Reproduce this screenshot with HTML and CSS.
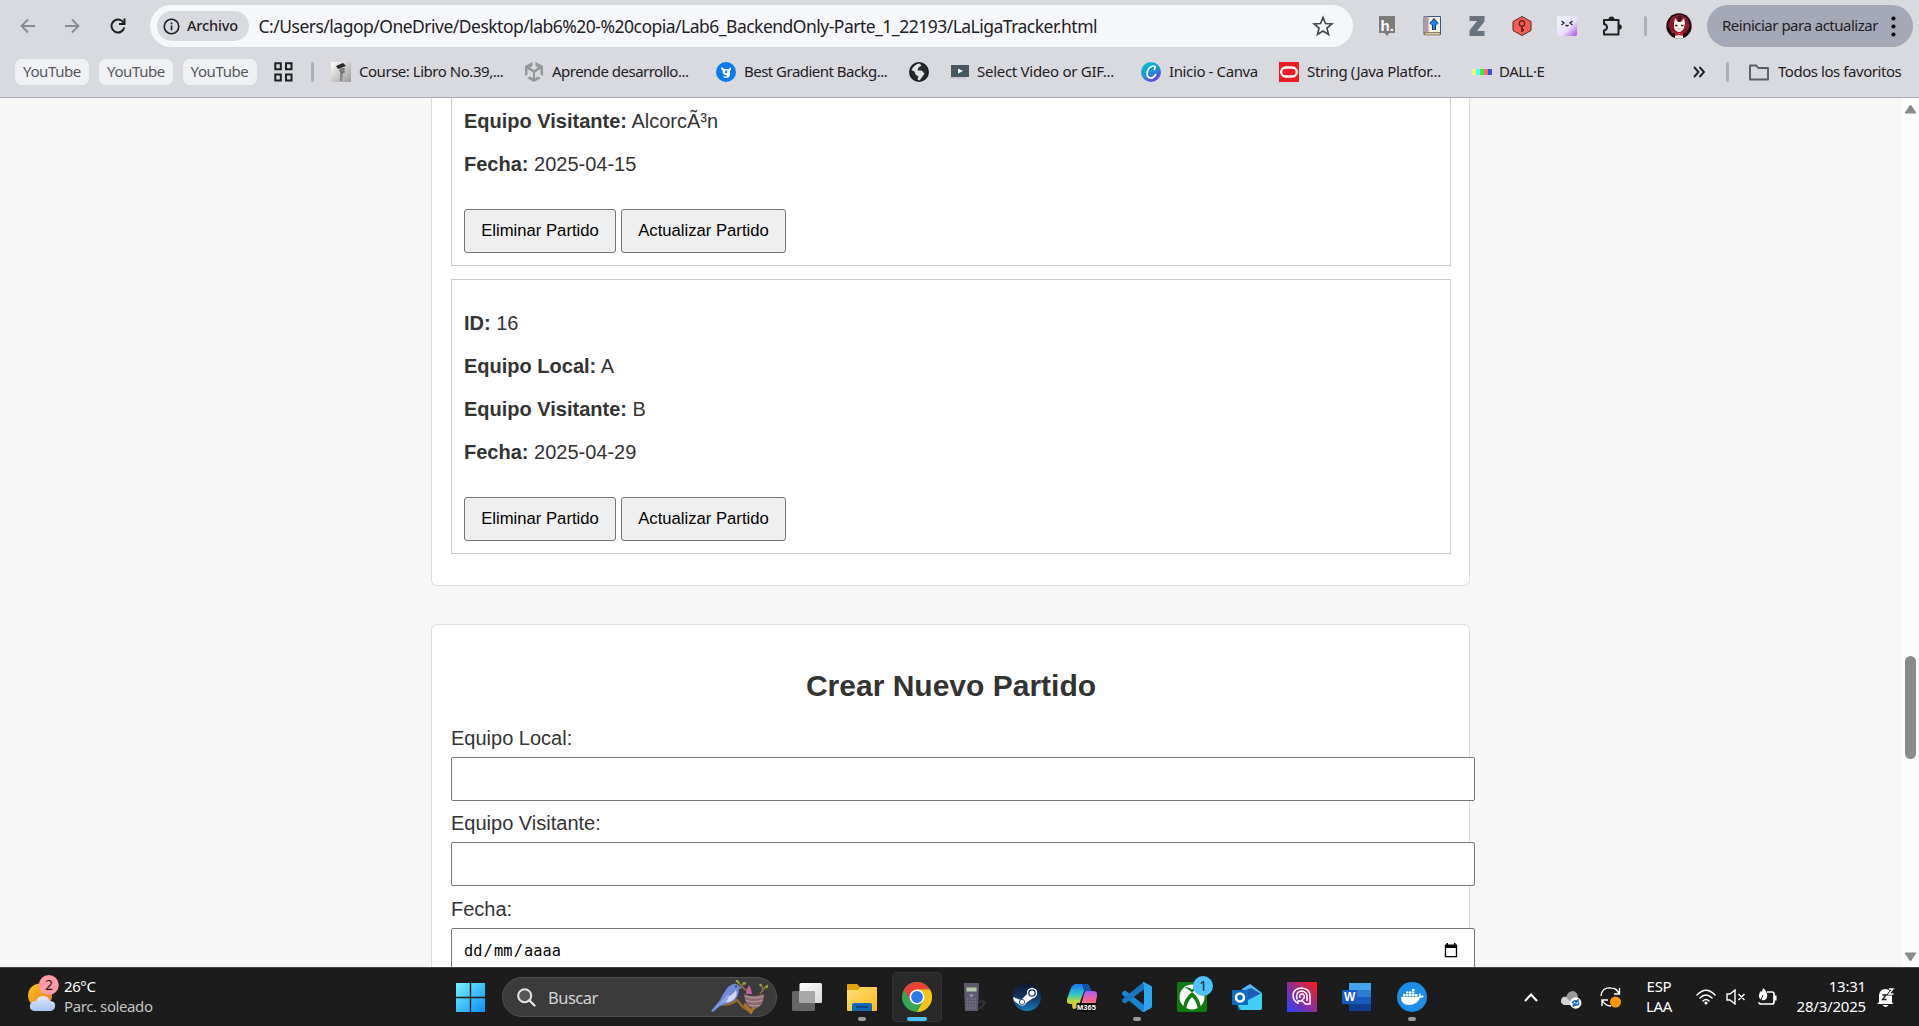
FILE: index.html
```html
<!DOCTYPE html>
<html lang="es">
<head>
<meta charset="utf-8">
<title>La Liga Tracker</title>
<link rel="stylesheet" href="styles.css">
</head>
<body>
<div class="screen">
  <header class="browser">
    <div class="toolbar">
      <svg class="nav back" viewBox="0 0 16 16"><path d="M15 8H1.500M8 1.500 1.500 8 8 14.500" fill="none" stroke="#8b8c92" stroke-width="1.900"/></svg>
      <svg class="nav forward" viewBox="0 0 16 16"><path d="M1 8H14.500M8 1.500 14.500 8 8 14.500" fill="none" stroke="#8b8c92" stroke-width="1.900"/></svg>
      <svg class="nav reload" viewBox="0 0 16 16"><path d="M13.600 4.700A6.500 6.500 0 1 0 14.300 9.600" fill="none" stroke="#1f2023" stroke-width="2"/><path d="M15.500.500V7H9V5h4.500V.500z" fill="#1f2023"/></svg>
      <div class="omnibox">
        <div class="chip"><svg class="info" viewBox="0 0 18 18"><circle cx="9" cy="9" r="7.700" fill="none" stroke="#1f2023" stroke-width="1.700"/><path d="M9 8v5M9 4.700v2" stroke="#1f2023" stroke-width="1.800"/></svg><span>Archivo</span></div>
        <span class="url">C:/Users/lagop/OneDrive/Desktop/lab6%20-%20copia/Lab6_BackendOnly-Parte_1_22193/LaLigaTracker.html</span>
        <svg class="star" viewBox="0 0 20 20"><path d="m10 2.200 2.200 5.500 5.900.400-4.500 3.800 1.400 5.800-5-3.200-5 3.200 1.400-5.800L1.900 8.100l5.900-.400z" fill="none" stroke="#45474c" stroke-width="1.500"/></svg>
      </div>
      <div class="extensions">
        <svg viewBox="0 0 20 20"><path d="M2 0h16v17h-5.500L10 20l-2.500-3H2z" fill="#7c7c7c"/><text x="3.500" y="14.500" class="ext-h">h.</text></svg>
        <svg viewBox="0 0 20 20"><path d="M2 .500h16.500v18H2z" fill="#f3eddd" stroke="#3c597a"/><path d="M2 .500h4.500v16H2z" fill="#b09aa6"/><path d="M2 16.500h16v2.500H3z" fill="#d8c99f" stroke="#6f6252" stroke-width=".700"/><path d="M12 14V5M9 8.500 12 5l3 3.500" fill="none" stroke="#18304c" stroke-width="4"/><path d="M12 13.500V5M9 8.500 12 5l3 3.500" fill="none" stroke="#168ae6" stroke-width="2.300"/></svg>
        <svg viewBox="0 0 20 20"><path d="M2.500 0h15v5.500L10 15h7.500v5h-15v-5.500L10 5H2.500z" fill="#68737e"/></svg>
        <svg viewBox="0 0 20 20"><path d="m10 .500 9 5v9l-9 5-9-5v-9z" fill="#fb5a50" stroke="#4f2c2e" stroke-width="1"/><circle cx="10" cy="7.500" r="2.700" fill="none" stroke="#5b2527" stroke-width="1.400"/><path d="M10 10v6M10 14h2" stroke="#5b2527" stroke-width="1.800"/></svg>
        <svg viewBox="0 0 20 20"><defs><linearGradient id="face" x2="1" y2="1"><stop stop-color="#f0f7ff"/><stop offset=".6" stop-color="#eadffa"/><stop offset="1" stop-color="#a44ce0"/></linearGradient></defs><rect width="20" height="20" rx="2" fill="url(#face)"/><path d="m4.500 5 2.500 2-2.500 2M15.500 5 13 7l2.500 2M8.500 9q1.500 1.500 3 0" fill="none" stroke="#222" stroke-width="1.300"/></svg>
        <svg viewBox="0 0 20 20"><path d="M2 4H16.500V18.500H2V14.500q3-.500 3-3.200T2 8z" fill="none" stroke="#1f2023" stroke-width="2" stroke-linejoin="round"/><path d="M6.500 3.500a3 3 0 0 1 6 0zM17 8.200a2.800 2.800 0 0 1 0 5.600z" fill="#1f2023"/></svg>
      </div>
      <i class="divider tool-divider"></i>
      <svg class="avatar" viewBox="0 0 26 26"><clipPath id="round"><circle cx="13" cy="13" r="12.700"/></clipPath><g clip-path="url(#round)"><path fill="#1d0509" d="M0 0h26v26H0z"/><path d="M5 5q8-7 16 0l3 8-4 7H6l-4-7z" fill="#8d1930"/><path d="M8 10 9 5l3 4h3l3-4 1 5-1 5q-2 4-5 4t-5-4z" fill="#fbf1ee"/><path d="M12 3q-1 4 1 6 3-2 2-6" fill="#3a0a14"/><path d="M9 12.500h2.500M15 12.500h2.500" stroke="#3b2327" stroke-width="1.500"/><path d="M11.500 16h3" stroke="#d69a68"/><path d="M9 20h8v6H9z" fill="#f3eee8"/><path d="m9 19 4 1.500L17 19v4l-4-1-4 1z" fill="#d31f35"/></g></svg>
      <button class="restart"><span>Reiniciar para actualizar</span><svg viewBox="0 0 5 21"><circle cx="2.500" cy="2.500" r="2.100"/><circle cx="2.500" cy="10.500" r="2.100"/><circle cx="2.500" cy="18.500" r="2.100"/></svg></button>
    </div>
    <nav class="bookmarks">
      <span class="group">YouTube</span><span class="group">YouTube</span><span class="group">YouTube</span>
      <svg class="apps" viewBox="0 0 19 20"><path d="M1.300 1.300h5.500v6H1.300zM12 1.300h5.500v6H12zM1.300 12.500h5.500v6H1.300zM12 12.500h5.500v6H12z" fill="none" stroke="#1f2023" stroke-width="2"/></svg>
      <i class="divider apps-divider"></i>
      <a class="mark w-course"><svg viewBox="0 0 20 20"><defs><linearGradient id="gray" x2="1" y2="1"><stop stop-color="#fff"/><stop offset="1" stop-color="#999"/></linearGradient></defs><path fill="url(#gray)" d="M0 0h20v20H0z"/><path d="m5 4 7-3 3 3-8 3z" fill="#292929"/><path d="M9 6h4l-1 7-1 6H9z" fill="#888"/><path d="m8 8 4 3M13 6v5" stroke="#555"/></svg><span>Course: Libro No.39,...</span></a>
      <a class="mark w-unity"><svg viewBox="0 0 20 20"><path d="M8.500 0 1 4v10l2.500-1.500V7L9 10.500V16l-3-1.500L3 16l7 4 7-4-3-1.500-3 1.500v-5.500L16.500 7v5.500L19 14V4l-7.500-4v4L14 5.500 10 8 6 5.500 8.500 4z" fill="#95979b"/></svg><span>Aprende desarrollo...</span></a>
      <a class="mark w-gradient"><svg viewBox="0 0 20 20"><circle cx="10" cy="10" r="10" fill="#087af4"/><path d="M5 5.500h2l1 1.500h5l1-1.500h1v2l-1 1v4q0 3.500-4.500 3.500-2 0-2.500-1.500 4 .500 4-1.500H9q-2.500-.500-2.500-3.500L6.500 8 5 7z" fill="#fff"/><path d="M9.200 8.500h2v2.700h-2z" fill="#087af4"/></svg><span>Best Gradient Backg...</span></a>
      <svg class="globe" viewBox="0 0 20 20"><circle cx="10" cy="10" r="9" fill="#27282b" stroke="#1f2023" stroke-width="2"/><path d="M2.500 8q3-6 8-6.500l2 2-3 2-1 3h4l3 3-2 3-3 4-2-1 1-3-3-2-1-3z" fill="#e2e3e7"/></svg>
      <a class="mark w-video"><svg viewBox="0 0 20 20"><path fill="#465760" d="M2 3h18v12H2z"/><path d="M0 16h17" stroke="#c8c8d0" stroke-width="2"/><path d="m9 6.500 5 2.500-5 2.500z" fill="#fff"/></svg><span>Select Video or GIF...</span></a>
      <a class="mark w-canva"><svg viewBox="0 0 20 20"><defs><linearGradient id="canva" x1=".2" x2=".8" y2="1"><stop stop-color="#00c4cc"/><stop offset=".5" stop-color="#1c93d8"/><stop offset="1" stop-color="#7830ec"/></linearGradient></defs><circle cx="10" cy="10" r="10" fill="url(#canva)"/><path d="M13 8q3-4-1-4-5 1-6 7 0 5 4 5 3 0 5-4" fill="none" stroke="#fff" stroke-width="1.700"/></svg><span>Inicio - Canva</span></a>
      <a class="mark w-java"><svg viewBox="0 0 20 20"><path fill="#ed1c24" d="M0 0h20v20H0z"/><rect x="2.200" y="5.500" width="15.600" height="9" rx="4.500" fill="none" stroke="#fff" stroke-width="2.300"/></svg><span>String (Java Platfor...</span></a>
      <a class="mark w-dalle"><svg viewBox="0 0 20 20"><path fill="#ffff67" d="M0 7h4v6H0z"/><path fill="#43ffff" d="M4 7h4v6H4z"/><path fill="#51da4b" d="M8 7h4v6H8z"/><path fill="#ff6e3c" d="M12 7h4v6h-4z"/><path fill="#3c46ff" d="M16 7h4v6h-4z"/></svg><span>DALL·E</span></a>
      <svg class="more" viewBox="0 0 12 12"><path d="m1 1 4.500 5L1 11M6.500 1l4.500 5-4.500 5" fill="none" stroke="#1f2023" stroke-width="1.900"/></svg>
      <i class="divider all-divider"></i>
      <a class="mark w-all"><svg viewBox="0 0 21 20"><path d="M1.500 3.500h6.300l2 2.500h9.700v11.500H1.500z" fill="none" stroke="#5b5d63" stroke-width="1.900" stroke-linejoin="round"/></svg><span>Todos los favoritos</span></a>
    </nav>
  </header>

  <div class="viewport">
    <main class="page">
      <section class="card matches">
        <article class="match continued">
          <p><strong>Equipo Visitante:</strong> AlcorcÃ³n</p>
          <p><strong>Fecha:</strong> 2025-04-15</p>
          <div class="actions"><button class="w-delete">Eliminar Partido</button><button class="w-update">Actualizar Partido</button></div>
        </article>
        <article class="match">
          <p><strong>ID:</strong> 16</p>
          <p><strong>Equipo Local:</strong> A</p>
          <p><strong>Equipo Visitante:</strong> B</p>
          <p><strong>Fecha:</strong> 2025-04-29</p>
          <div class="actions"><button class="w-delete">Eliminar Partido</button><button class="w-update">Actualizar Partido</button></div>
        </article>
      </section>
      <section class="card create">
        <h2>Crear Nuevo Partido</h2>
        <label for="local">Equipo Local:</label>
        <input id="local" class="field" type="text">
        <label for="visitor">Equipo Visitante:</label>
        <input id="visitor" class="field" type="text">
        <label>Fecha:</label>
        <div class="field date"><span>dd</span><span class="slash">/</span><span>mm</span><span class="slash">/</span><span>aaaa</span><svg viewBox="0 0 14 15"><path d="M1.500 5v8.700h11V5" fill="none" stroke="#000" stroke-width="1.300"/><path d="M.800 1.500h12.400v3.500H.800zM2.500 0H4v2H2.500zM10 0h1.500v2H10z"/></svg></div>
      </section>
    </main>
    <div class="scrollbar"><svg class="up" viewBox="0 0 13 10"><path d="M6.500 1 12 9H1z" fill="#8b8b8b" stroke="#8b8b8b" stroke-linejoin="round"/></svg><i class="thumb"></i><svg class="down" viewBox="0 0 13 10"><path d="M6.500 9 1 1h11z" fill="#8b8b8b" stroke="#8b8b8b" stroke-linejoin="round"/></svg></div>
  </div>

  <footer class="taskbar">
    <div class="weather">
      <svg viewBox="0 0 36 40"><defs><linearGradient id="sun" x2="1" y2="1"><stop stop-color="#f9c22a"/><stop offset="1" stop-color="#f17812"/></linearGradient><linearGradient id="cloud" x2="0" y2="1"><stop stop-color="#dfe9fb"/><stop offset="1" stop-color="#a6c6f4"/></linearGradient></defs><circle cx="14" cy="21.500" r="12" fill="url(#sun)"/><path d="M8 37q-5-1-4-6 1-4 6-4 2-5 7-5t7 5q6 0 5 6-1 4-5 4z" fill="url(#cloud)"/><circle cx="22.800" cy="11" r="10" fill="#ff99a4"/><text x="22.800" y="16.300" class="badge-text">2</text></svg>
      <div><span class="temp">26°C</span><span class="sky">Parc. soleado</span></div>
    </div>
    <svg class="start" viewBox="0 0 29 29"><defs><linearGradient id="win" gradientUnits="userSpaceOnUse" x2="29" y2="29"><stop stop-color="#7af0ff"/><stop offset="1" stop-color="#0791ff"/></linearGradient></defs><path d="M0 0h13.800v13.800H0zM15.200 0H29v13.800H15.200zM0 15.200h13.800V29H0zM15.200 15.200H29V29H15.200z" fill="url(#win)"/></svg>
    <div class="search">
      <svg class="lens" viewBox="0 0 19 19"><circle cx="7.700" cy="7.700" r="6.500" fill="#565656" stroke="#e3e4e5" stroke-width="2"/><path d="m12.500 12.500 5 5" stroke="#e3e4e5" stroke-width="2.300" stroke-linecap="round"/></svg><span>Buscar</span>
      <svg class="bird" viewBox="0 0 58 34"><path d="M11 24q8 2 16-4l6 7 8 5 2-5" fill="none" stroke="#9a6a2c" stroke-width="2.300"/><path d="M34 24q5 4 7 8 2-5 8-7" fill="none" stroke="#a8752c" stroke-width="3"/><path d="M28 2q5 7 11 10M31 7l3-5M50 14l6-8M53 10l-2-6" fill="none" stroke="#94713a" stroke-width="1.500"/><path d="m29 3-3-3M33 4l3-1M56 8l2-3M51 6l-1-2" stroke="#94a83a" stroke-width="2.200"/><path d="M1 31 10 20Q17 6 21 5q5-3 8 1l3 2-3 1q0 9-7 13-9 3-12 4l-7 6z" fill="#6e8bd8"/><path d="M17 17q6-2 9-7 2 6-3 10-4 3-8 2z" fill="#d4d8f2"/><path d="m3 30 7-7 9-10-1 7-8 5z" fill="#8fa4e4"/><circle cx="26" cy="6.500" r=".900" fill="#16244c"/><path d="M34 14q10 4 20 0 0 14-10 14-9-1-10-14" fill="#8c6a72"/><path d="M35 16q10 4 18 0M36 20q8 4 16 0M39 25q5 2 10 0" fill="none" stroke="#bf9a98" stroke-width="1.200"/><path d="m36 14 1-5 2-4 2 4 1 5z" fill="#c4619a"/></svg>
    </div>
    <div class="apps-row">
      <span class="app"><svg viewBox="0 0 30 30"><defs><linearGradient id="white" x2="1" y2="1"><stop stop-color="#fff"/><stop offset="1" stop-color="#d8d8d8"/></linearGradient></defs><rect y="9" width="23" height="20" rx="1.500" fill="#666"/><rect x="7.500" y="1" width="22.500" height="20" rx="1.500" fill="url(#white)"/><path d="M7.500 9H23v12H7.500z" fill="#a8a8a8"/></svg></span>
      <span class="app run"><svg viewBox="0 0 30 30"><defs><linearGradient id="folder" x2="1" y2="1"><stop stop-color="#ffe079"/><stop offset="1" stop-color="#ffb91c"/></linearGradient></defs><path d="M0 3q0-1 1-1h9l3 3h16v10H0z" fill="#e6a20d"/><path d="M0 8h11l3-3h15q1 0 1 1v22q0 1-1 1H1q-1 0-1-1z" fill="url(#folder)"/><path d="M5 29v-6q0-2 2-2h16q2 0 2 2v6z" fill="#0e69b5"/><path d="M9 25h12" stroke="#083f79" stroke-width="1.500"/></svg></span>
      <span class="app active"><svg viewBox="0 0 30 30"><circle cx="15" cy="15" r="15" fill="#34a853"/><path d="M15 0a15 15 0 0 1 13 7.500H15L8.500 18.700 2 7.500A15 15 0 0 1 15 0z" fill="#ea4335"/><path d="M28 7.500A15 15 0 0 1 15 30l6.500-11.300L21.500 11 15 7.500z" fill="#fbc116"/><circle cx="15" cy="15" r="7.500" fill="#fff"/><circle cx="15" cy="15" r="5.900" fill="#2879ee"/></svg></span>
      <span class="app"><svg viewBox="0 0 30 30"><path d="M22 27q5-3 6-8M22 20l5-1" fill="none" stroke="#333" stroke-width="2.500"/><path fill="#5d5a6c" d="M7 1h15l-1 28H8z"/><path fill="#b4c8a4" d="M9.500 5.500h10v4h-10z"/><path d="M9.500 17h10M9.500 20h10M9.500 23h10M9.500 26h10" stroke="#85819a" stroke-dasharray="1.600 1"/><circle cx="14.500" cy="13.500" r="1.800" fill="#8d86ae"/></svg></span>
      <span class="app"><svg viewBox="0 0 30 30"><defs><linearGradient id="steam" x2="0" y2="1"><stop stop-color="#10122e"/><stop offset=".55" stop-color="#123b6c"/><stop offset="1" stop-color="#137eb5"/></linearGradient></defs><circle cx="15" cy="15" r="14" fill="url(#steam)"/><path d="m1 15 8 3 7-7 5 5-7 5q-2 4-6 2l-6-4z" fill="#fff"/><circle cx="20" cy="11" r="5.200" fill="#fff"/><circle cx="20" cy="11" r="3.200" fill="#fff" stroke="#15395e" stroke-width="1.300"/><circle cx="10" cy="20" r="2.600" fill="none" stroke="#31577c" stroke-width="1"/></svg></span>
      <span class="app"><svg viewBox="0 0 30 30"><defs><linearGradient id="left" x2="0" y2="1"><stop stop-color="#1676f0"/><stop offset=".4" stop-color="#28c6d0"/><stop offset=".7" stop-color="#bcd83a"/><stop offset="1" stop-color="#ffb02e"/></linearGradient><linearGradient id="right" x2="0" y2="1"><stop stop-color="#a55cff"/><stop offset=".5" stop-color="#f35fa0"/><stop offset="1" stop-color="#ff8064"/></linearGradient></defs><path d="M9 2h10q3 0 4 4l1 3-5-1q-2 0-3 4l-3 8q-2 7-6 7-2 0-2-5H3q-4 0-3-5L4 6q2-4 5-4z" fill="url(#left)"/><path d="M15 2h4q3 0 4 4l1 3h-7z" fill="#1450a8"/><path d="M19 9h7q5 0 4 5l-2 10H14l3-12q1-3 2-3z" fill="url(#right)"/><rect x="9.500" y="21" width="20" height="8.500" rx="1" fill="#090909"/><text x="19.500" y="28" class="m365">M365</text></svg></span>
      <span class="app run"><svg viewBox="0 0 30 30"><path d="M3 9.500 22 24v6L1.500 12.500q-1-1 0-2z" fill="#1686cf" stroke="#1686cf" stroke-width="2" stroke-linejoin="round"/><path d="M3 20.500 22 6V1L1.500 17.500q-1 1 0 2z" fill="#1677bd" stroke="#1677bd" stroke-width="2" stroke-linejoin="round"/><path d="m21.500 0 7 3.500q1.500.700 1.500 2v19q0 1.300-1.500 2L21.500 30l-1-1 1.500-1V2l-1.500-1z" fill="#2aa5f2"/><path d="M22 8.500v13L13.500 15z" fill="#1c1c1c"/></svg></span>
      <span class="app"><svg viewBox="0 0 36 36" class="xbox"><rect x="3" y="6" width="30" height="30" rx="2" fill="#107c10"/><circle cx="18" cy="21" r="12.500" fill="#fff"/><path d="M9 32q1-10 9-16 8 6 9 16l-3 2q-1-8-6-13-5 5-6 13z" fill="#107c10"/><path d="M10.500 11.500q4-1 7.500 2 3.500-3 7.500-2-3 1-7.500 5-4.500-4-7.500-5" fill="#107c10"/><circle cx="29" cy="10" r="10" fill="#4cc2ff"/><text x="29" y="15" class="badge-text">1</text></svg></span>
      <span class="app"><svg viewBox="0 0 30 30"><path d="M6 10 18 2l12 9v15q0 2-2 2H8q-2 0-2-3z" fill="#167dca"/><path d="m10 7 8-5 12 9-14 9z" fill="#55b5ee"/><path d="m14 8 5-2 10 6-13 8z" fill="#1b5cb4"/><path d="m6 23 24-12v15q0 2-2 2H9z" fill="#40d0f5"/><rect y="8" width="16" height="15" rx="1" fill="#0b6cc6"/><circle cx="8" cy="15.500" r="4" fill="none" stroke="#fff" stroke-width="2.500"/></svg></span>
      <span class="app"><svg viewBox="0 0 30 30"><defs><linearGradient id="magenta" x1="0" y1="1" x2="1" y2="0"><stop stop-color="#2247ff"/><stop offset=".45" stop-color="#8a2e9b"/><stop offset="1" stop-color="#ff1a18"/></linearGradient></defs><path fill="url(#magenta)" d="M0 0h30v30H0z"/><path d="M11 21.500q-5-3-5-8.500 1-7 9-7 8 1 8 8v8h-4.500l-4-4M10 17.500q-2-8 5-8.500 5 1 5 5v5M13 16q-1-4 2-4 3 0 2 4l-3 3h-3v3" fill="none" stroke="#fff" stroke-width="1.500"/></svg></span>
      <span class="app"><svg viewBox="0 0 30 30"><path fill="#41a5ee" d="M7 1h22v7H7z"/><path fill="#2b7cd3" d="M7 8h22v7H7z"/><path fill="#185abd" d="M7 15h22v7H7z"/><path fill="#103f91" d="M7 22h22v7H7z"/><rect y="8" width="15" height="14" rx="1" fill="#185abd"/><text x="7.500" y="19" class="word">W</text></svg></span>
      <span class="app run"><svg viewBox="0 0 30 30"><circle cx="15" cy="15" r="15" fill="#1d8ee8"/><path d="M4 15h17q2-1 1-4 2 1 2 3 2-1 3 0-1 2-4 2-3 7-11 7-8 0-8-8" fill="#fff"/><path d="M6 12h2.500v2.500H6zM9 12h2.500v2.500H9zM12 12h2.500v2.500H12zM15 12h2.500v2.500H15zM18 12h2.500v2.500H18zM9 9.500h2.500v2H9zM12 9.500h2.500v2H12zM15 9.500h2.500v2H15zM15 7h2.500v2H15z" fill="#fff"/></svg></span>
    </div>
    <div class="tray">
      <svg class="chevron" viewBox="0 0 14 9"><path d="m1 8 6-6.500L13 8" fill="none" stroke="#fff" stroke-width="2"/></svg>
      <svg class="cloud" viewBox="0 0 21 18"><path d="M4 14q-4-1-4-4 1-5 5-4 2-6 7-6 5 1 5 7v7z" fill="#999"/><path d="M0 10q1-5 5-4l7 8H4q-4-1-4-4" fill="#d5d5d5"/><circle cx="14.700" cy="12" r="5.800" fill="#fff"/><path d="M11.500 12q1-3 5-2M18 12q-1 3-5 2M17 8v3h-3M12.500 16v-3h3" fill="none" stroke="#1770c8" stroke-width="1.500"/></svg>
      <svg class="sync" viewBox="0 0 22 22"><path d="M1 10Q2 1 11 2q6 0 8 6M19.500 2v6H14M2 20v-6h6M2 14q3 6 9 6" fill="none" stroke="#fff" stroke-width="1.400"/><circle cx="15.500" cy="16" r="5.500" fill="#ff9800"/></svg>
      <div class="lang"><span>ESP</span><span>LAA</span></div>
      <svg class="wifi" viewBox="0 0 20 16"><path d="M1 6q9-9.500 18 0M4 9q6-6 12 0M7 12q3-3 6 0" fill="none" stroke="#fff" stroke-width="1.500" stroke-linecap="round"/><circle cx="10" cy="14" r="1.600" fill="#fff"/></svg>
      <svg class="mute" viewBox="0 0 20 16"><path d="M1 5h3l5-4v14l-5-4H1zM12.500 5l6 6M18.500 5l-6 6" fill="none" stroke="#fff" stroke-width="1.400"/></svg>
      <svg class="battery" viewBox="0 0 20 18"><path d="M10 4h5q2 0 2 2v8q0 2-2 2H4q-2 0-2-2M18.700 7.500v5" fill="none" stroke="#fff" stroke-width="1.700"/><path d="M6 0q5 4 4 9-1 4-5 3-5-2-2-8l1-1 1 1z" fill="#fff"/><path d="M3 15q1-4 3-8" fill="none" stroke="#1c1c1c"/></svg>
      <div class="clock"><span>13:31</span><span>28/3/2025</span></div>
      <svg class="bell" viewBox="0 0 18 20"><path d="M2 15V8q1-6 6-6 6 0 7 6v7l1 2H0zM5.500 18h6q-3 4-6 0" fill="#fff"/><path d="M5.500 8h3.500l-3.500 4.500h4" fill="none" stroke="#1c1c1c" stroke-width="1.300"/><path d="M12 2h4l-4 5h4.500" fill="none" stroke="#1c1c1c" stroke-width="3"/><path d="M12 2h4l-4 5h4.500" fill="none" stroke="#fff" stroke-width="1.300"/></svg>
    </div>
  </footer>
</div>
</body>
</html>
```
FILE: styles.css
```css
* { box-sizing: border-box; }
body { margin: 0; overflow: hidden; }
svg { display: block; flex: none; }
button { font: inherit; cursor: default; }
.screen { width: 1919px; height: 1026px; display: flex; flex-direction: column; font-family: "Noto Sans", "Open Sans", sans-serif; }

/* browser chrome */
.browser { height: 98px; flex: none; background: #d9dae0; border-bottom: 1px solid #a9aab1; color: #1f2023; font-size: 15px; white-space: nowrap; }
.toolbar { display: flex; align-items: center; padding-top: 5px; height: 47px; }
.nav { width: 16px; height: 16px; }
.back { margin-left: 20px; }
.forward { margin-left: 28px; }
.reload { margin-left: 30px; }
.omnibox { margin-left: 24px; width: 1203px; height: 42px; border-radius: 21px; background: #f6f7fa; display: flex; align-items: center; padding-left: 7px; }
.chip { width: 92px; height: 30px; border-radius: 15px; background: #d9dae0; display: flex; align-items: center; padding-left: 6px; gap: 7px; font-weight: 500; font-size: 14.500px; letter-spacing: -.15px; }
.chip span { padding-bottom: 2px; }
.info { width: 17px; height: 17px; }
.url { margin-left: 9.500px; width: 1053.500px; font-size: 17.500px; letter-spacing: -.51px; }
.star { width: 22px; height: 22px; }
.extensions { display: flex; gap: 25px; margin-left: 24px; }
.extensions svg { width: 20px; height: 20px; }
.ext-h { font: bold 15px "Liberation Sans", sans-serif; fill: #fff; }
.divider { width: 3px; height: 20px; background: #adb0bc; border-radius: 2px; flex: none; }
.tool-divider { margin-left: 22px; }
.avatar { width: 26px; height: 26px; margin-left: 19px; }
.restart { margin-left: 15px; width: 206px; height: 42px; border: 0; border-radius: 21px; background: #a5a9b6; color: #1f2023; display: flex; align-items: center; padding: 0 17px 0 15px; justify-content: space-between; letter-spacing: -.5px; }
.restart span { padding-bottom: 2px; }
.restart svg { width: 5px; height: 21px; }
.bookmarks { display: flex; align-items: center; height: 50px; padding-left: 15px; letter-spacing: -.52px; }
.group { width: 74px; height: 26px; border-radius: 7px; background: #f0f1f4; color: #55575c; display: flex; align-items: center; justify-content: center; margin-right: 10px; padding-bottom: 2px; letter-spacing: -.4px; }
.group + .group { margin-right: 9.500px; }
.apps { width: 19px; height: 20px; margin-left: 8px; }
.apps-divider { margin-left: 18px; }
.mark { display: flex; align-items: center; gap: 8px; flex: none; }
.mark span { padding-bottom: 2px; }
.mark svg { width: 20px; height: 20px; }
.w-course { margin-left: 17px; width: 193px; letter-spacing: -.47px; }
.w-unity { width: 192px; }
.w-gradient { width: 193px; }
.globe { width: 20px; height: 20px; }
.w-video { margin-left: 20px; width: 192px; letter-spacing: -.28px; }
.w-canva { width: 138px; letter-spacing: -.38px; }
.w-java { width: 193px; letter-spacing: -.32px; }
.w-dalle { width: 221px; gap: 7px; }
.more { width: 12px; height: 12px; }
.all-divider { margin-left: 21px; }
.w-all { margin-left: 19px; letter-spacing: -.45px; }
.w-all svg { width: 22px; }

/* web page */
.viewport { height: 869px; flex: none; display: flex; overflow: hidden; background: #f7f7f7; }
.page { flex: 1; padding-left: 431px; color: #333; font: 20px/23px "Liberation Sans", Arial, sans-serif; }
.card { width: 1039px; background: #fff; border: 1px solid #ddd; border-radius: 6px; padding: 0 18px 0 19px; }
.matches { height: 488px; border-top: 0; border-radius: 0 0 6px 6px; }
.match { height: 275px; border: 1px solid #ccc; padding: 32px 12px 0; margin-bottom: 13px; }
.match p { margin: 0 0 20px; }
.continued { height: 168px; border-top: 0; padding-top: 12px; }
.actions { display: flex; gap: 5px; padding-top: 13px; }
.actions button { height: 44px; padding: 0; border: 1px solid #767676; border-radius: 3px; background: #efefef; color: #000; font-size: 16.670px; line-height: 40px; }
.w-delete { width: 152px; }
.w-update { width: 165px; }
.create { margin-top: 38px; height: 420px; display: flex; flex-direction: column; }
.create h2 { margin: 43px 0 23px; font-size: 30px; line-height: 36px; text-align: center; }
.create label { display: block; height: 30px; }
.create .field { width: 1024px; flex: none; height: 44px; margin: 0 0 11.400px; border: 1px solid #767676; border-radius: 2px; background: #fff; padding: 0 12px; }
.create .date { display: flex; align-items: center; color: #000; font: 15.300px "DejaVu Sans Mono", monospace; padding-top: 2px; }
.date .slash { padding: 0 1.200px; }
.date svg { width: 14px; height: 15px; margin-left: auto; margin-right: 4px; }
.scrollbar { width: 18px; background: #fcfcfc; display: flex; flex-direction: column; align-items: center; }
.scrollbar svg { width: 13px; height: 10px; }
.up { margin-top: 6px; }
.thumb { margin-top: 542px; width: 11px; height: 103px; border-radius: 6px; background: #8b8b8b; }
.down { margin-top: 193px; }

/* taskbar */
.taskbar { height: 59px; background: #1c1c1c; border-top: 1px solid #444; display: flex; align-items: flex-start; color: #fff; font-size: 15px; letter-spacing: -.5px; white-space: nowrap; }
.weather { width: 456px; padding: 6px 0 0 26px; display: flex; gap: 2px; }
.weather svg { width: 36px; height: 40px; }
.weather div, .lang, .clock { display: flex; flex-direction: column; line-height: 20px; }
.weather div { padding-top: 2px; letter-spacing: -.4px; }
.sky { color: #c4c4c4; }
.badge-text { font: 14px "Noto Sans", sans-serif; fill: #1c1c1c; text-anchor: middle; }
.start { width: 29px; height: 29px; margin-top: 15px; }
.search { margin: 9px 0 0 17px; width: 275px; height: 40px; border-radius: 20px; border: 1px solid #505050; background: #3b3b3b; display: flex; align-items: center; padding-left: 14px; color: #d4d4d4; font-size: 16.500px; }
.lens { width: 19px; height: 19px; }
.search span { margin-left: 12px; width: 164px; }
.bird { width: 58px; height: 34px; margin-left: -2px; }
.apps-row { display: flex; margin: 4px 0 0 5px; }
.app { width: 50px; height: 50px; margin-right: 5px; border-radius: 5px; display: flex; flex-direction: column; align-items: center; padding-top: 10px; flex: none; }
.app svg { width: 30px; height: 30px; }
.app .xbox { width: 36px; height: 36px; margin-top: -6px; overflow: visible; }
.active { background: #292929; box-shadow: inset 0 0 0 1px #333; }
.run::after, .active::after { content: ""; margin-top: 5px; width: 8px; height: 4px; border-radius: 2px; background: #9a9a9a; }
.active::after { width: 20px; background: #4cc2ff; }
.m365 { font: bold 7.500px "Liberation Sans", sans-serif; fill: #fff; text-anchor: middle; letter-spacing: 0; }
.word { font: bold 12px "Liberation Sans", sans-serif; fill: #fff; text-anchor: middle; }
.tray { display: flex; height: 58px; align-items: center; }
.chevron { width: 14px; height: 9px; margin-left: 82px; }
.cloud { width: 21px; height: 18px; margin-left: 23px; margin-top: 5px; }
.sync { width: 22px; height: 22px; margin-left: 18px; }
.lang { width: 74px; text-align: center; align-items: center; padding-bottom: 2px; letter-spacing: -.3px; }
.wifi { width: 20px; height: 16px; }
.mute { width: 20px; height: 16px; margin-left: 10px; }
.battery { width: 20px; height: 18px; margin-left: 11px; }
.clock { width: 89px; text-align: right; padding-bottom: 2px; letter-spacing: -.2px; }
.bell { width: 18px; height: 20px; margin-left: 11px; }
```
